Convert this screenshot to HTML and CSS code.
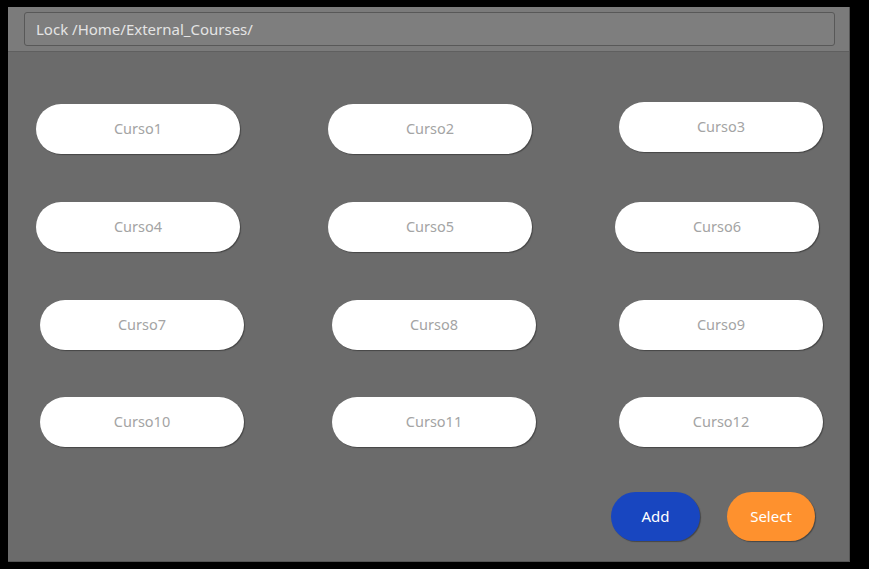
FILE: index.html
```html
<!DOCTYPE html>
<html>
<head>
<meta charset="utf-8">
<link rel="stylesheet" href="styles.css">
</head>
<body>
<div class="panel">
  <div class="header">
    <div class="path">Lock /Home/External_Courses/</div>
  </div>
  <div class="courses">
    <div class="row row-a">
      <button class="course">Curso1</button>
      <button class="course">Curso2</button>
      <button class="course up">Curso3</button>
    </div>
    <div class="row row-a">
      <button class="course">Curso4</button>
      <button class="course">Curso5</button>
      <button class="course left">Curso6</button>
    </div>
    <div class="row row-b">
      <button class="course">Curso7</button>
      <button class="course">Curso8</button>
      <button class="course">Curso9</button>
    </div>
    <div class="row row-b last">
      <button class="course">Curso10</button>
      <button class="course">Curso11</button>
      <button class="course">Curso12</button>
    </div>
  </div>
  <div class="actions">
    <button class="action add">Add</button>
    <button class="action select">Select</button>
  </div>
</div>
</body>
</html>
```
FILE: styles.css
```css
html, body {
  margin: 0;
  padding: 0;
  background: #000;
  width: 869px;
  height: 569px;
  overflow: hidden;
  font-family: "Noto Sans", "DejaVu Sans", sans-serif;
}
.panel {
  margin: 7px 0 0 8px;
  width: 842px;
  height: 555px;
  background: #6b6b6b;
  box-sizing: border-box;
  border-right: 1px solid #555;
  border-bottom: 1px solid #555;
  display: flex;
  flex-direction: column;
}
.header {
  height: 45px;
  box-sizing: border-box;
  background: #7b7b7b;
  border-bottom: 1px solid #5f5f5f;
  padding: 5px 14px 0 16px;
}
.path {
  height: 34px;
  box-sizing: border-box;
  border: 1px solid #585858;
  border-radius: 3px;
  background: #7e7e7e;
  color: #e4e4e4;
  font-size: 15px;
  line-height: 32px;
  padding-left: 11px;
}
.courses {
  margin-top: 52px;
  display: flex;
  flex-direction: column;
  gap: 48px;
}
.row {
  display: grid;
  grid-template-columns: 292px 291px 204px;
  height: 50px;
}
.row-a { padding-left: 28px; }
.row-b { padding-left: 32px; }
.row-b .course:last-child { margin-left: -4px; }
.row.last { margin-top: -1px; }
.course {
  width: 204px;
  height: 50px;
  border: none;
  border-radius: 25px;
  background: #fff;
  color: #a4a4a4;
  font-family: inherit;
  font-size: 14.5px;
  padding: 0 0 2px;
  box-shadow: 1px 1px 1px rgba(0,0,0,0.35);
}
.course.up { margin-top: -2px; }
.course.left { margin-left: -4px; }
.actions {
  margin-top: 45px;
  display: flex;
  justify-content: flex-end;
  gap: 27px;
  padding-right: 34px;
}
.action {
  height: 49px;
  border: none;
  border-radius: 25px;
  color: #fff;
  font-family: inherit;
  font-size: 15px;
  padding: 0 0 2px;
  box-shadow: 1px 1px 1px rgba(0,0,0,0.35);
}
.add { width: 89px; background: #1846c0; }
.select { width: 88px; background: #fe912e; }
```
